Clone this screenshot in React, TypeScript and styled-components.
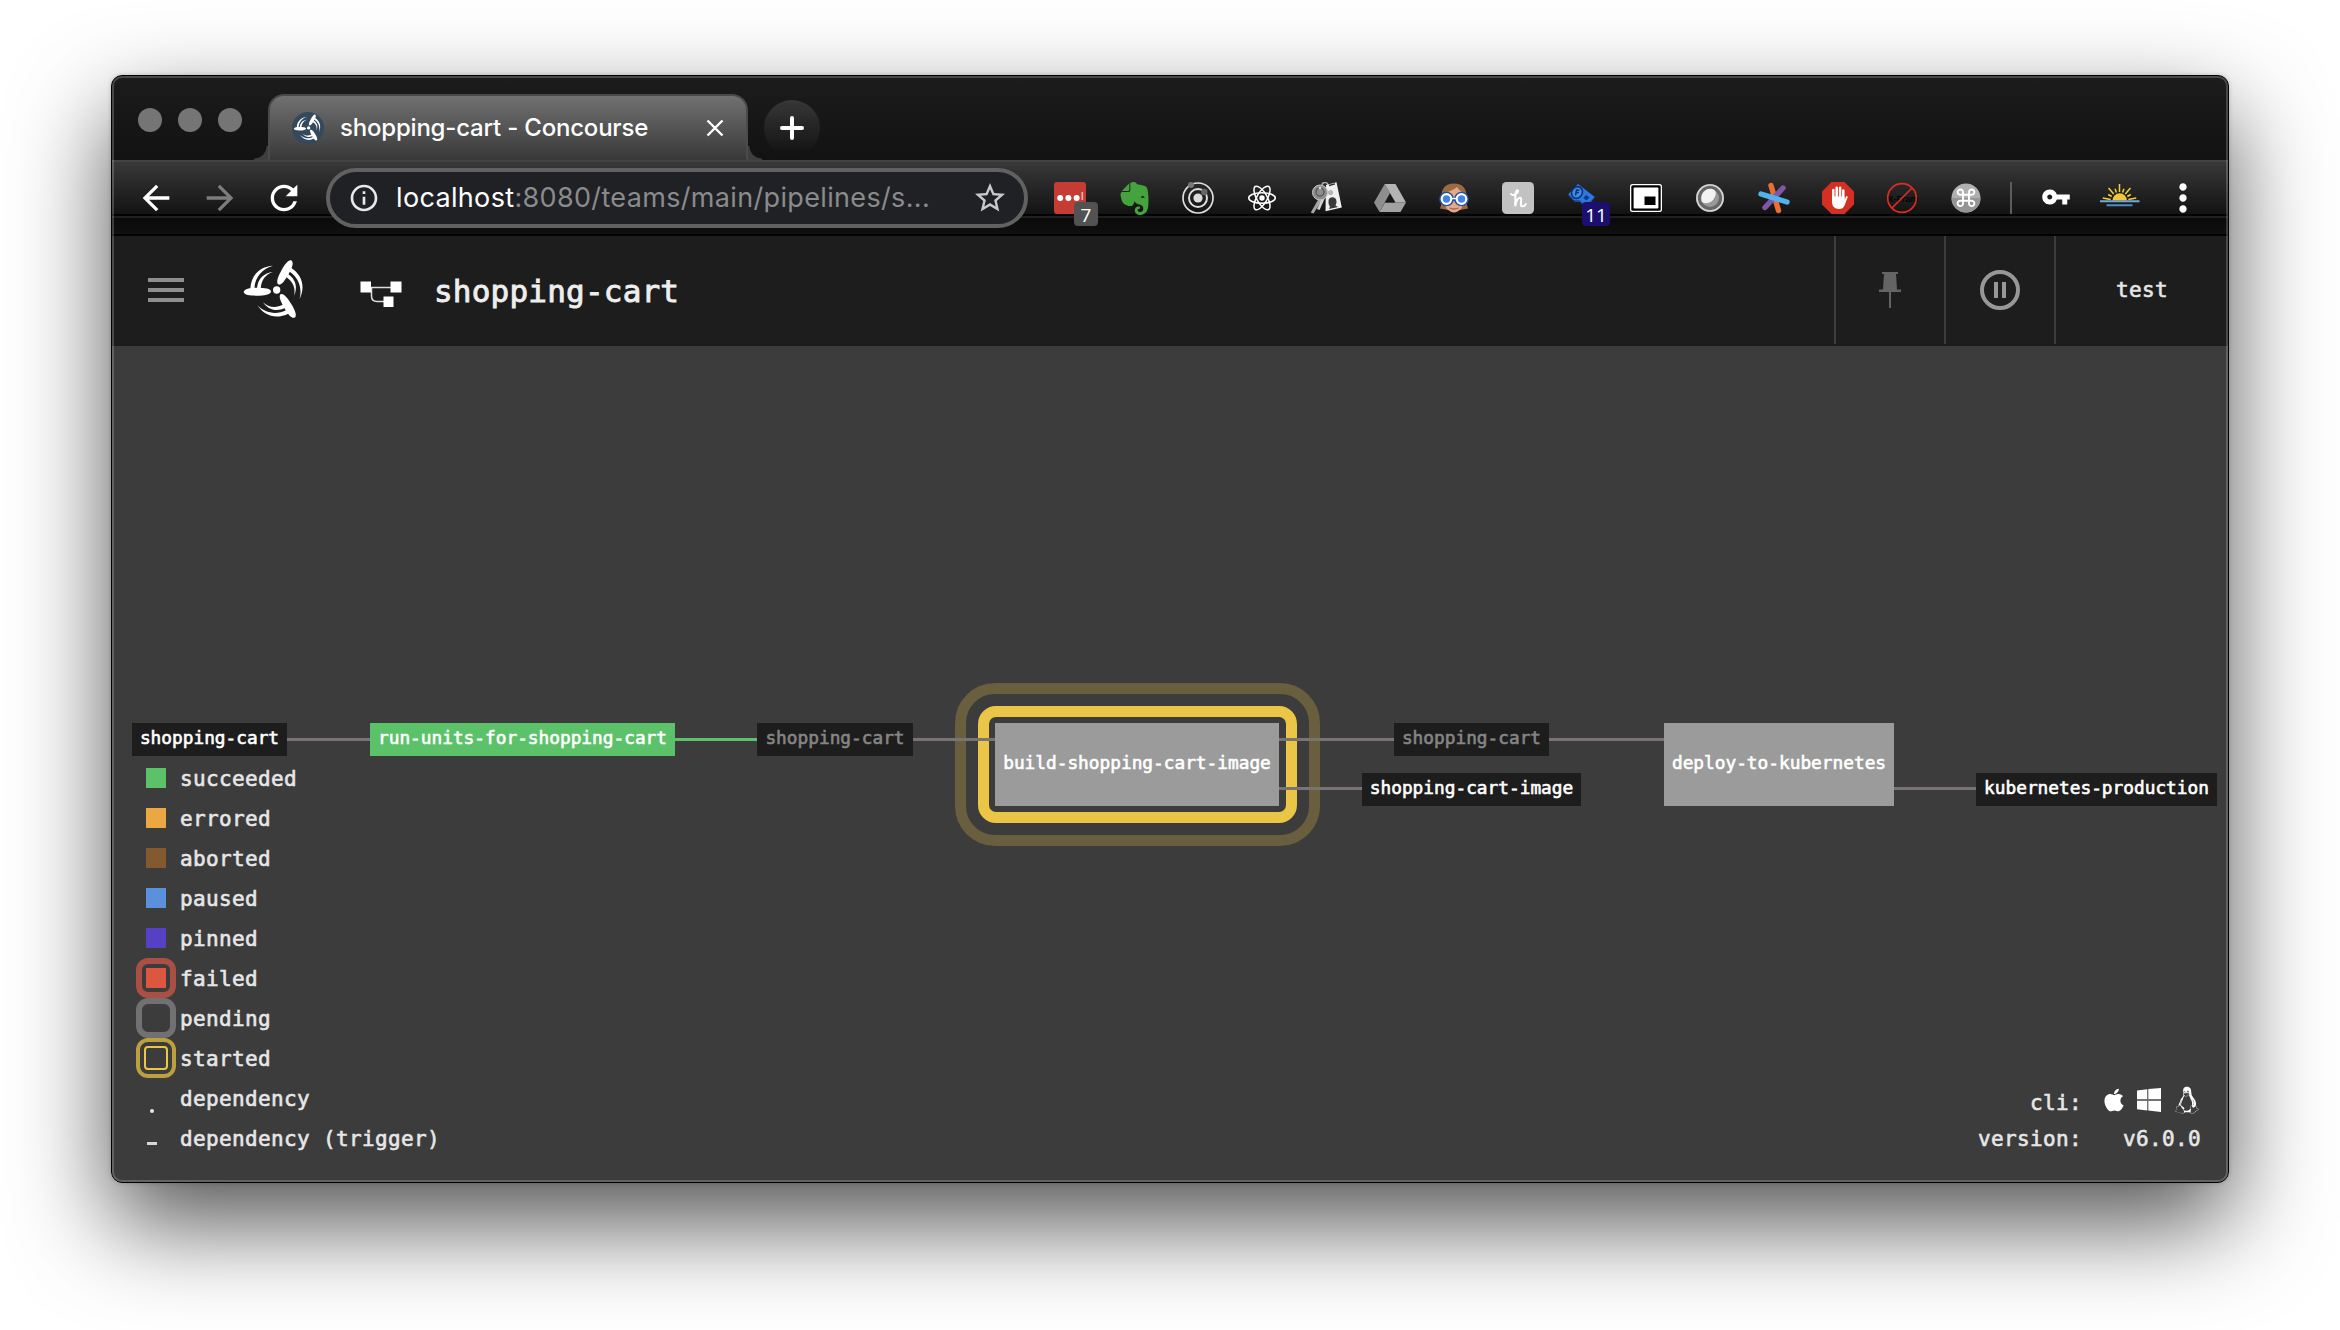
import React from "react";
import styled, { createGlobalStyle } from "styled-components";
import { MdArrowBack, MdArrowForward, MdRefresh, MdStarBorder, MdInfoOutline, MdVpnKey, MdMoreVert } from "react-icons/md";
import { SiEvernote } from "react-icons/si";
import { FaApple, FaHandPaper } from "react-icons/fa";
import { DiLinux } from "react-icons/di";

const mono = `"DejaVu Sans Mono", "Liberation Mono", monospace`;
const sans = `Inter, "Liberation Sans", sans-serif`;

const Global = createGlobalStyle`
  * { box-sizing: border-box; }
  body { margin: 0; background: #fff; overflow: hidden; }
  svg { display: block; flex: none; }
`;

const Desktop = styled.div`
  width: 2340px;
  height: 1330px;
  padding: 75px 111px 147px;
  background: #fff;
  overflow: hidden;
`;

const Window = styled.div`
  display: flex;
  flex-direction: column;
  position: relative;
  width: 2118px;
  height: 1108px;
  border: 1px solid #000;
  border-radius: 11px;
  overflow: hidden;
  background: #3c3c3c;
  &::after {
    content: "";
    position: absolute;
    inset: 0;
    border: 2px solid rgba(255, 255, 255, 0.2);
    border-radius: 10px;
    pointer-events: none;
  }
`;

const Shadow = styled.div`
  width: 2118px;
  height: 1108px;
  border-radius: 11px;
  box-shadow: 0 40px 96px rgba(0, 0, 0, 0.68), 0 0 4px rgba(0, 0, 0, 0.2);
`;

/* browser chrome */
const TabStrip = styled.div`
  display: flex;
  align-items: flex-end;
  flex: none;
  height: 84px;
  padding-left: 26px;
  background: linear-gradient(#1c1c1c, #121212);
`;

const Lights = styled.div`
  display: flex;
  gap: 16px;
  margin-right: 26px;
  align-self: flex-start;
  padding-top: 32px;
`;

const Light = styled.span`
  width: 24px;
  height: 24px;
  border-radius: 50%;
  background: #757575;
`;

const Tab = styled.div`
  display: flex;
  align-items: center;
  position: relative;
  width: 480px;
  height: 66px;
  padding: 0 22px 0 22px;
  border: 2px solid #4a4a4a;
  border-bottom: 0;
  border-radius: 16px 16px 0 0;
  background: linear-gradient(#717171, #383838);
  &::before,
  &::after {
    content: "";
    position: absolute;
    bottom: 0;
    width: 14px;
    height: 14px;
  }
  &::before {
    left: -16px;
    background: radial-gradient(circle at 0 0, transparent 12px, #3e3e3e 13px);
  }
  &::after {
    right: -16px;
    background: radial-gradient(circle at 100% 0, transparent 12px, #3e3e3e 13px);
  }
`;

const TabTitle = styled.span`
  flex: 1;
  margin-left: 16px;
  font: 500 24px/32px ${sans};
  letter-spacing: -0.2px;
  color: #fff;
  white-space: nowrap;
`;

const NewTab = styled.div`
  display: grid;
  place-items: center;
  width: 56px;
  height: 56px;
  margin: 0 0 4px 16px;
  border-radius: 50%;
  background: linear-gradient(#373737, #131313 95%);
`;

const Toolbar = styled.div`
  display: flex;
  align-items: center;
  flex: none;
  height: 76px;
  padding-left: 28px;
  background: linear-gradient(
    #424242 0 2px, #383838 2px, #131313 54px, #020202 54px 56px,
    #1f1f1f 56px 58px, #0a0a0a 58px, #101010 74px, #000 74px
  );
`;

const NavButton = styled.div<{ $dim?: boolean }>`
  display: flex;
  align-items: center;
  justify-content: center;
  width: 32px;
  height: 32px;
  margin-right: 32px;
  color: ${(p) => (p.$dim ? "#7c7c7c" : "#fff")};
`;

const Omnibox = styled.div`
  display: flex;
  align-items: center;
  width: 702px;
  height: 60px;
  margin-left: -6px;
  padding: 0 16px 0 18px;
  border: 4px solid #616161;
  border-radius: 30px;
  background: #202124;
  color: #c8c9ca;
`;

const Url = styled.span`
  flex: 1;
  margin-left: 16px;
  font: 400 27px/36px ${sans};
  letter-spacing: 0.34px;
  color: #8a8b8d;
  white-space: nowrap;
  b { font-weight: 400; color: #fff; }
`;

const Extensions = styled.div`
  display: flex;
  gap: 32px;
  margin-left: 26px;
`;

const Extension = styled.div`
  position: relative;
  width: 32px;
  height: 32px;
`;

const Badge = styled.span<{ $bg: string; $left: number; $w: number }>`
  position: absolute;
  top: 20px;
  left: ${(p) => p.$left}px;
  width: ${(p) => p.$w}px;
  height: 24px;
  border-radius: 4px;
  background: ${(p) => p.$bg};
  color: #fff;
  font: 500 19px/26px "Open Sans", ${sans};
  text-align: center;
`;

const Separator = styled.span`
  width: 2px;
  height: 32px;
  margin: 0 30px 0 28px;
  background: #5c5c5c;
`;

const MenuIcons = styled.div`
  display: flex;
  align-items: center;
  margin-left: -1px;
  color: #fff;
`;

/* page header */
const Header = styled.header`
  display: flex;
  align-items: center;
  flex: none;
  height: 110px;
  padding-left: 36px;
  background: #1e1d1d;
`;

const Burger = styled.div`
  display: flex;
  flex-direction: column;
  gap: 6px;
  width: 36px;
  margin: 0 59px 2px 0;
  span { height: 4px; background: #8f8f8f; }
`;

const LogoSlot = styled.div`
  margin: 0 57px 4px 0;
`;

const PipelineSlot = styled.div`
  margin-top: 6px;
`;

const Title = styled.h1`
  flex: 1;
  margin: 0 0 0 32px;
  font: 400 31px/40px ${mono};
  -webkit-text-stroke: 0.9px currentColor;
  letter-spacing: 0.2px;
  color: #eeeeee;
`;

const HeaderCell = styled.div<{ $w: number }>`
  display: grid;
  place-items: center;
  align-self: flex-start;
  width: ${(p) => p.$w}px;
  height: 108px;
  border-left: 2px solid #3d3c3c;
  font: 400 21px/28px ${mono};
  -webkit-text-stroke: 0.6px currentColor;
  letter-spacing: 0.4px;
  color: #e6e7e8;
`;

/* pipeline */
const Page = styled.main`
  display: flex;
  align-items: flex-end;
  justify-content: space-between;
  position: relative;
  flex: 1;
  padding: 0 27px 23px 24px;
  background: #3c3c3c;
`;

const Canvas = styled.div`
  position: absolute;
  inset: 0;
`;

const Node = styled.div<{ $x: number; $y: number; $w: number; $h: number; $bg: string; $fg?: string }>`
  display: flex;
  align-items: center;
  justify-content: center;
  position: absolute;
  left: ${(p) => p.$x}px;
  top: ${(p) => p.$y}px;
  width: ${(p) => p.$w}px;
  height: ${(p) => p.$h}px;
  padding-bottom: 4px;
  background: ${(p) => p.$bg};
  color: ${(p) => p.$fg || "#fff"};
  font: 400 17.8px/24px ${mono};
  -webkit-text-stroke: 0.6px currentColor;
  white-space: nowrap;
`;

const Edge = styled.div<{ $x: number; $y: number; $w: number; $c?: string }>`
  position: absolute;
  left: ${(p) => p.$x}px;
  top: ${(p) => p.$y}px;
  width: ${(p) => p.$w}px;
  height: 3px;
  background: ${(p) => p.$c || "#7a7373"};
`;

const Halo = styled.div<{ $x: number; $y: number; $w: number; $h: number; $r: number; $c: string }>`
  position: absolute;
  left: ${(p) => p.$x}px;
  top: ${(p) => p.$y}px;
  width: ${(p) => p.$w}px;
  height: ${(p) => p.$h}px;
  border: 11.5px solid ${(p) => p.$c};
  border-radius: ${(p) => p.$r}px;
`;

const Legend = styled.dl`
  display: grid;
  grid-template-columns: 40px auto;
  grid-auto-rows: 40px;
  column-gap: 4px;
  position: relative;
  margin: 0;
`;

const Swatch = styled.dt`
  display: grid;
  place-items: center;
  width: 40px;
  height: 40px;
  margin-top: -1px;
`;

const Chip = styled.span<{ $c: string }>`
  width: 20px;
  height: 20px;
  background: ${(p) => p.$c};
`;

const Ring = styled.span<{ $c: string; $b: number }>`
  display: grid;
  place-items: center;
  width: 40px;
  height: 40px;
  border: ${(p) => p.$b}px solid ${(p) => p.$c};
  border-radius: 12px;
`;

const InnerRing = styled.span`
  width: 24px;
  height: 24px;
  border: 2px solid #ebc546;
  border-radius: 4px;
`;

const Dot = styled.span`
  width: 4px;
  height: 4px;
  border-radius: 2px;
  margin: 25px 9px 0 0;
  background: #e6e7e8;
`;

const Dash = styled.span`
  width: 10px;
  height: 3px;
  margin: 11px 8px 0 0;
  background: #d6d7d8;
`;

const Label = styled.dd`
  margin: 0;
  font: 400 21px/40px ${mono};
  -webkit-text-stroke: 0.6px currentColor;
  letter-spacing: 0.36px;
  color: #e6e7e8;
  white-space: pre;
`;

const Info = styled.div`
  display: grid;
  grid-template-columns: auto 119px;
  grid-template-rows: 36px 36px;
  justify-items: end;
  position: relative;
  margin-bottom: 2px;
  color: #e6e7e8;
  font: 400 21px/36px ${mono};
  -webkit-text-stroke: 0.6px currentColor;
  letter-spacing: 0.36px;
`;

const InfoLabel = styled.span`
  white-space: nowrap;
`;

const Platforms = styled.span`
  display: flex;
  align-items: center;
  height: 30px;
  color: #fff;
  -webkit-text-stroke: 0;
`;

const Fan = ({ size, color = "#fff" }: { size: number; color?: string }) => (
  <svg width={size} height={size} viewBox="40 58 180 180" fill={color}>
    <circle cx="141" cy="151" r="11" />
    {[0, 120, 240].map((a) => (
      <g key={a} transform={`rotate(${a} 141 151)`}>
        <path d="M42 157C44 146 62 144 82 144C105 144 124 146 124 156C122 164 105 168 80 168C60 168 44 166 42 157Z" />
        <path d="M130 78C92 80 64 105 62 147L74 147C76 110 100 86 130 78Z" />
        <path d="M130 97C104 100 84 115 82 147L93 147C95 120 108 104 130 97Z" />
      </g>
    ))}
  </svg>
);

const Favicon = () => (
  <svg width="32" height="32" viewBox="0 0 32 32">
    <circle cx="16" cy="16" r="16" fill="#34495e" />
    <g transform="translate(1.5 2)"><Fan size={27} /></g>
  </svg>
);

const Ext = ({ children }: { children: React.ReactNode }) => (
  <svg width="32" height="32" viewBox="0 0 32 32">{children}</svg>
);

const extensions: React.ReactNode[] = [
  <>
    <Ext>
      <rect width="32" height="32" rx="3" fill="#c43c33" />
      <circle cx="6.2" cy="16" r="3" fill="#fff" />
      <circle cx="14.4" cy="16" r="3" fill="#fff" />
      <circle cx="22.6" cy="16" r="3" fill="#fff" />
      <path d="M28.3 10v8" stroke="#e9b5b1" strokeWidth="1.6" />
    </Ext>
    <Badge $bg="#525252" $left={20} $w={24}>7</Badge>
  </>,
  <SiEvernote size={33} color="#44a33d" />,
  <Ext>
    <g fill="none" stroke="#dedede" strokeWidth="1.7">
      <circle cx="16" cy="16" r="15" />
      <circle cx="16" cy="16" r="9" strokeWidth="2" />
    </g>
    <circle cx="16" cy="16" r="4.6" fill="#dcdcdc" />
    <circle cx="9" cy="3" r="3" fill="#777" />
    <circle cx="22.3" cy="10" r="3.2" fill="#666" />
  </Ext>,
  <Ext>
    <g fill="none" stroke="#fff" strokeWidth="1.5">
      <ellipse cx="16" cy="16" rx="13.3" ry="5.2" />
      <ellipse cx="16" cy="16" rx="13.3" ry="5.2" transform="rotate(60 16 16)" />
      <ellipse cx="16" cy="16" rx="13.3" ry="5.2" transform="rotate(120 16 16)" />
    </g>
    <circle cx="16" cy="16" r="2.7" fill="#fff" />
  </Ext>,
  <Ext>
    <path d="M12 3a3 3 0 0 1 6 1" fill="none" stroke="#aaa" strokeWidth="1.5" />
    <path d="M16 3L26.500 0.200L31.800 25.500L15.500 29.200z" fill="#f0f0f0" />
    <path d="M19 3.500l6-1.600" stroke="#333" strokeWidth="1.5" />
    <circle cx="20.5" cy="10.5" r="2.6" fill="#b5b5b5" />
    <path d="M18.5 19c0-5 8-5 8 .5c0 3-1 3-1 4l2.500 1.600l-9 2l1-2.600c-1-1.500-1.500-2-1.500-5.500z" fill="#3a3a3a" />
    <path d="M9 16L0.800 30.600L3.500 31.500L12.500 17z" fill="#a5a5a5" />
    <path d="M11.500 17L7 27L9.500 28L14.500 17z" fill="#d0d0d0" />
    <circle cx="10" cy="10.500" r="7.500" fill="#8c8c8c" stroke="#c9c9c9" strokeWidth="1" />
    <circle cx="10" cy="10" r="4" fill="none" stroke="#555" strokeWidth="1.300" />
    <circle cx="10" cy="6" r="1.300" fill="#ddd" />
  </Ext>,
  <Ext>
    <path d="M10.700 2L16 11L5.500 30L0 20.500z" fill="#8e8e8e" />
    <path d="M10.700 2H21.500L32 20.500H21.500z" fill="#b4b4b4" />
    <path d="M5.500 30L11 20.500H32L26.500 30z" fill="#a2a2a2" />
    <path d="M16 12.500L20.500 20.500H11.400z" fill="#181818" />
  </Ext>,
  <Ext>
    <path d="M16 1.500C7 1.500 3.500 7 3.500 14C3.500 20 3.500 23 2 26.500L10 28L22 28L30 26.500C28.500 22 28.500 19 28.500 14C28.500 7 25 1.500 16 1.500z" fill="#9b6a42" />
    <path d="M6.500 14C8 9 14 9.500 19 5C21 9 25 9 25.500 14V21C25 26 20 30.500 16 30.500S7 26 6.500 21z" fill="#e3a98a" />
    <path d="M11.500 26q4.500 2 9 0" stroke="#a86060" strokeWidth="1.300" fill="none" />
    <g fill="#3f86e8" stroke="#1f4f9c" strokeWidth="5.500">
      <circle cx="8.500" cy="17" r="4.600" /><circle cx="23.500" cy="17" r="4.600" />
    </g>
    <path d="M12 17h8" stroke="#1f4f9c" strokeWidth="4" />
    <g fill="#3f86e8" stroke="#fff" strokeWidth="2.200">
      <circle cx="8.500" cy="17" r="4.800" /><circle cx="23.500" cy="17" r="4.800" />
    </g>
    <path d="M13.500 16.500h5" stroke="#fff" strokeWidth="1.600" />
  </Ext>,
  <Ext>
    <rect width="32" height="32" rx="4.500" fill="#c2c2c2" />
    <path d="M9 12C11 14.500 16.500 11.500 16 8.800C15 7 13.300 10 13.300 14V24.300C14 19.500 15.500 16 18 15.800C21 16 17 24 20 24.300C22 24.500 23.200 23.500 23.800 22" fill="none" stroke="#fff" strokeWidth="2" strokeLinecap="round" />
  </Ext>,
  <>
    <Ext>
      <path d="M2 13L12 2L29 15L20 27L14 20L9 20z" fill="#1b4da8" />
      <path d="M2.500 12L12 2L28.500 15L20 24L13.500 18L8 18z" fill="#2d77de" />
      <ellipse cx="11" cy="10.500" rx="5.300" ry="6" transform="rotate(30 11 10.500)" fill="#3d8df0" stroke="#10306e" strokeWidth="1.600" />
      <path d="M9.500 13.500l1-5.500h3M10 10.500h3" fill="none" stroke="#10306e" strokeWidth="1.500" />
      <path d="M20 13l3.500 2.500l-3 3l-3-2.500z" fill="#12387e" />
    </Ext>
    <Badge $bg="#1c0f6e" $left={16} $w={28}>11</Badge>
  </>,
  <Ext>
    <rect y="2" width="32" height="28" rx="2.500" fill="#fff" />
    <rect x="1.300" y="3.300" width="29.400" height="25.400" rx="1.500" fill="#000" />
    <rect x="3.600" y="5.400" width="24.800" height="21" rx="1" fill="#fff" />
    <rect x="14.500" y="14.500" width="11" height="8.500" fill="#000" />
  </Ext>,
  <Ext>
    <circle cx="16" cy="16" r="14" fill="#8b8b8b" />
    <circle cx="16" cy="16" r="13" fill="#666" stroke="#d6d6d6" strokeWidth="1.700" />
    <circle cx="16" cy="16" r="9" fill="#999" />
    <path d="M7.500 19C6 11 12 6 18 7C24 8 22 15 18 19C14 22 9 22 7.500 19z" fill="#f2f2f2" />
  </Ext>,
  <Ext>
    <g strokeWidth="5.400" strokeLinecap="round">
      <path d="M13 3.500L20.500 28.500" stroke="#ec6e35" />
      <path d="M25 6L7 25.500" stroke="#8056a8" />
      <path d="M3 12L29 20" stroke="#50b3ea" />
    </g>
  </Ext>,
  <Ext>
    <path d="M9.500 0H22.500L32 9.500V22.500L22.500 32H9.500L0 22.500V9.500z" fill="#d32f22" />
    <path d="M11.300 18V8M14.700 17V5.700M18.100 17V5.700M21.300 18V8.500" stroke="#fff" strokeWidth="2.500" strokeLinecap="round" />
    <path d="M10 14.500H22.500V18L24 14.500C25 13.200 26 14.500 25.600 15.500L22.500 23.500C21.500 26 20 27 17 27C12.500 27 10 24 10 20z" fill="#fff" />
  </Ext>,
  <Ext>
    <text x="1.500" y="20" fontFamily="Liberation Sans" fontWeight="700" fontSize="9" fill="#050505">X-Fram</text>
    <circle cx="16" cy="16" r="14.300" fill="none" stroke="#de2c22" strokeWidth="1.700" />
    <path d="M26 6L6 26" stroke="#de2c22" strokeWidth="1.700" />
  </Ext>,
  <Ext>
    <circle cx="16" cy="16" r="14.500" fill="#b0b0b0" />
    <path d="M1.500 16a14.500 14.500 0 0 0 29 0z" fill="#959595" />
    <path d="M13 12.800H19V18.800H13zM13 12.800H10.800A2.700 2.700 0 1 1 13 10.300zM19 12.800V10.300A2.700 2.700 0 1 1 21.200 12.800zM19 18.800H21.200A2.700 2.700 0 1 1 19 21.300zM13 18.800V21.300A2.700 2.700 0 1 1 10.800 18.800z" fill="none" stroke="#fff" strokeWidth="1.900" />
  </Ext>,
];

const Sunrise = () => (
  <svg width="40" height="26" viewBox="0 0 40 26">
    <g stroke="#f3cf3e" strokeWidth="1.500">
      {[-80, -60, -40, -20, 0, 20, 40, 60, 80].map((a) => (
        <path key={a} d={a % 40 ? "M19.500 9V5" : "M19.500 9V1"} transform={`rotate(${a} 19.500 18)`} />
      ))}
    </g>
    <path d="M12.500 17.500a7.200 7.200 0 0 1 14.400 0z" fill="#f2c53c" />
    <path d="M0 18.300h39.500" stroke="#6cabdc" strokeWidth="2" />
    <path d="M6.500 22.300h26" stroke="#4c8dc4" strokeWidth="2" />
  </svg>
);

const SunriseSlot = styled.div`
  margin: 0 21px 4px 29px;
`;

const KeySlot = styled.div`
  margin-bottom: 3px;
`;

const Pipeline = () => (
  <svg width="42" height="26" viewBox="0 0 42 26">
    <path d="M5 6.500H36M11.500 6.500V15Q11.500 20.500 17 20.500H25" fill="none" stroke="#ddd" strokeWidth="1.500" />
    <path d="M0.500 0.500h10.500v11h-10.500zM30.500 0.500h11v11h-11zM23.500 15.500h10v10.500h-10z" fill="#fff" />
  </svg>
);

const states: [React.ReactNode, string][] = [
  [<Chip $c="#5cc26a" />, "succeeded"],
  [<Chip $c="#eaa843" />, "errored"],
  [<Chip $c="#85592f" />, "aborted"],
  [<Chip $c="#5b91dc" />, "paused"],
  [<Chip $c="#5640c6" />, "pinned"],
  [<Ring $c="#a94f43" $b={6}><Chip $c="#dd5640" /></Ring>, "failed"],
  [<Ring $c="#717171" $b={6} />, "pending"],
  [<Ring $c="#bc9f3f" $b={4}><InnerRing /></Ring>, "started"],
  [<Dot />, "dependency"],
  [<Dash />, "dependency (trigger)"],
];

export default function App() {
  return (
    <Desktop>
      <Global />
      <Shadow>
        <Window>
          <TabStrip>
            <Lights><Light /><Light /><Light /></Lights>
            <Tab>
              <Favicon />
              <TabTitle>shopping-cart - Concourse</TabTitle>
              <svg width="18" height="18" viewBox="0 0 18 18" stroke="#fff" strokeWidth="2.4">
                <path d="M1.500 1.500L16.500 16.500M16.500 1.500L1.500 16.500" />
              </svg>
            </Tab>
            <NewTab>
              <svg width="24" height="24" viewBox="0 0 24 24" stroke="#fff" strokeWidth="4" strokeLinecap="round">
                <path d="M12 2V22M2 12H22" />
              </svg>
            </NewTab>
          </TabStrip>
          <Toolbar>
            <NavButton><MdArrowBack size={40} /></NavButton>
            <NavButton $dim><MdArrowForward size={40} /></NavButton>
            <NavButton><MdRefresh size={40} /></NavButton>
            <Omnibox>
              <MdInfoOutline size={32} color="#e8e8e8" />
              <Url><b>localhost</b>:8080/teams/main/pipelines/s...</Url>
              <MdStarBorder size={36} />
            </Omnibox>
            <Extensions>
              {extensions.map((e, i) => <Extension key={i}>{e}</Extension>)}
            </Extensions>
            <Separator />
            <MenuIcons>
              <KeySlot><MdVpnKey size={30} /></KeySlot>
              <SunriseSlot><Sunrise /></SunriseSlot>
              <MdMoreVert size={44} />
            </MenuIcons>
          </Toolbar>
          <Header>
            <Burger><span /><span /><span /></Burger>
            <LogoSlot><Fan size={60} /></LogoSlot>
            <PipelineSlot><Pipeline /></PipelineSlot>
            <Title>shopping-cart</Title>
            <HeaderCell $w={110}>
              <svg width="22" height="36" viewBox="0 0 22 36" fill="#646464">
                <path d="M3 0H19V2H17L18 17.500H22V20H0V17.500H4L5 2H3zM10 20H12V36H10z" />
              </svg>
            </HeaderCell>
            <HeaderCell $w={110}>
              <svg width="40" height="40" viewBox="0 0 40 40" fill="#979797">
                <circle cx="20" cy="20" r="18" fill="none" stroke="#979797" strokeWidth="4" />
                <path d="M14 12h4v16h-4zM22 12h4v16h-4z" />
              </svg>
            </HeaderCell>
            <HeaderCell $w={174}>test</HeaderCell>
          </Header>
          <Page>
            <Canvas>
              <Halo $x={842.5} $y={337} $w={365} $h={163} $r={40} $c="#695e3d" />
              <Halo $x={865.5} $y={360} $w={319} $h={117} $r={18} $c="#ebc546" />
              <Edge $x={174} $y={392} $w={86} />
              <Edge $x={562} $y={392} $w={84} $c="#5cc26a" />
              <Edge $x={800} $y={392} $w={85} />
              <Edge $x={1166} $y={392} $w={118} />
              <Edge $x={1166} $y={441} $w={86} />
              <Edge $x={1436} $y={392} $w={118} />
              <Edge $x={1781} $y={441} $w={85} />
              <Node $x={20} $y={377} $w={155} $h={33} $bg="#1e1d1d">shopping-cart</Node>
              <Node $x={258} $y={377} $w={305} $h={33} $bg="#5cc26a">run-units-for-shopping-cart</Node>
              <Node $x={645} $y={377} $w={156} $h={33} $bg="#1e1d1d" $fg="#868585">shopping-cart</Node>
              <Node $x={883} $y={377} $w={284} $h={83} $bg="#9b9b9b">build-shopping-cart-image</Node>
              <Node $x={1282} $y={377} $w={155} $h={33} $bg="#1e1d1d" $fg="#868585">shopping-cart</Node>
              <Node $x={1250} $y={427} $w={219} $h={33} $bg="#1e1d1d">shopping-cart-image</Node>
              <Node $x={1552} $y={377} $w={230} $h={83} $bg="#9b9b9b">deploy-to-kubernetes</Node>
              <Node $x={1864} $y={427} $w={241} $h={33} $bg="#1e1d1d">kubernetes-production</Node>
            </Canvas>
            <Legend>
              {states.map(([mark, name]) => (
                <React.Fragment key={name}>
                  <Swatch>{mark}</Swatch>
                  <Label>{name}</Label>
                </React.Fragment>
              ))}
            </Legend>
            <Info>
              <InfoLabel>cli:</InfoLabel>
              <Platforms>
                <FaApple size={26} />
                <svg width="10" height="2" />
                <svg width="24" height="24" viewBox="0 0 24 24" fill="#fff">
                  <path d="M0 2.500L10.300 1.200V11.200H0zM11.300 1L24 0V11.200H11.300zM0 12.800H10.300V22.500L0 21.300zM11.300 12.800H24V24L11.300 22.600z" />
                  <path d="M0 11.200H24V12.800H0z" fill="#777" />
                </svg>
                <svg width="12" height="2" />
                <DiLinux size={28} />
              </Platforms>
              <InfoLabel>version:</InfoLabel>
              <InfoLabel>v6.0.0</InfoLabel>
            </Info>
          </Page>
        </Window>
      </Shadow>
    </Desktop>
  );
}
